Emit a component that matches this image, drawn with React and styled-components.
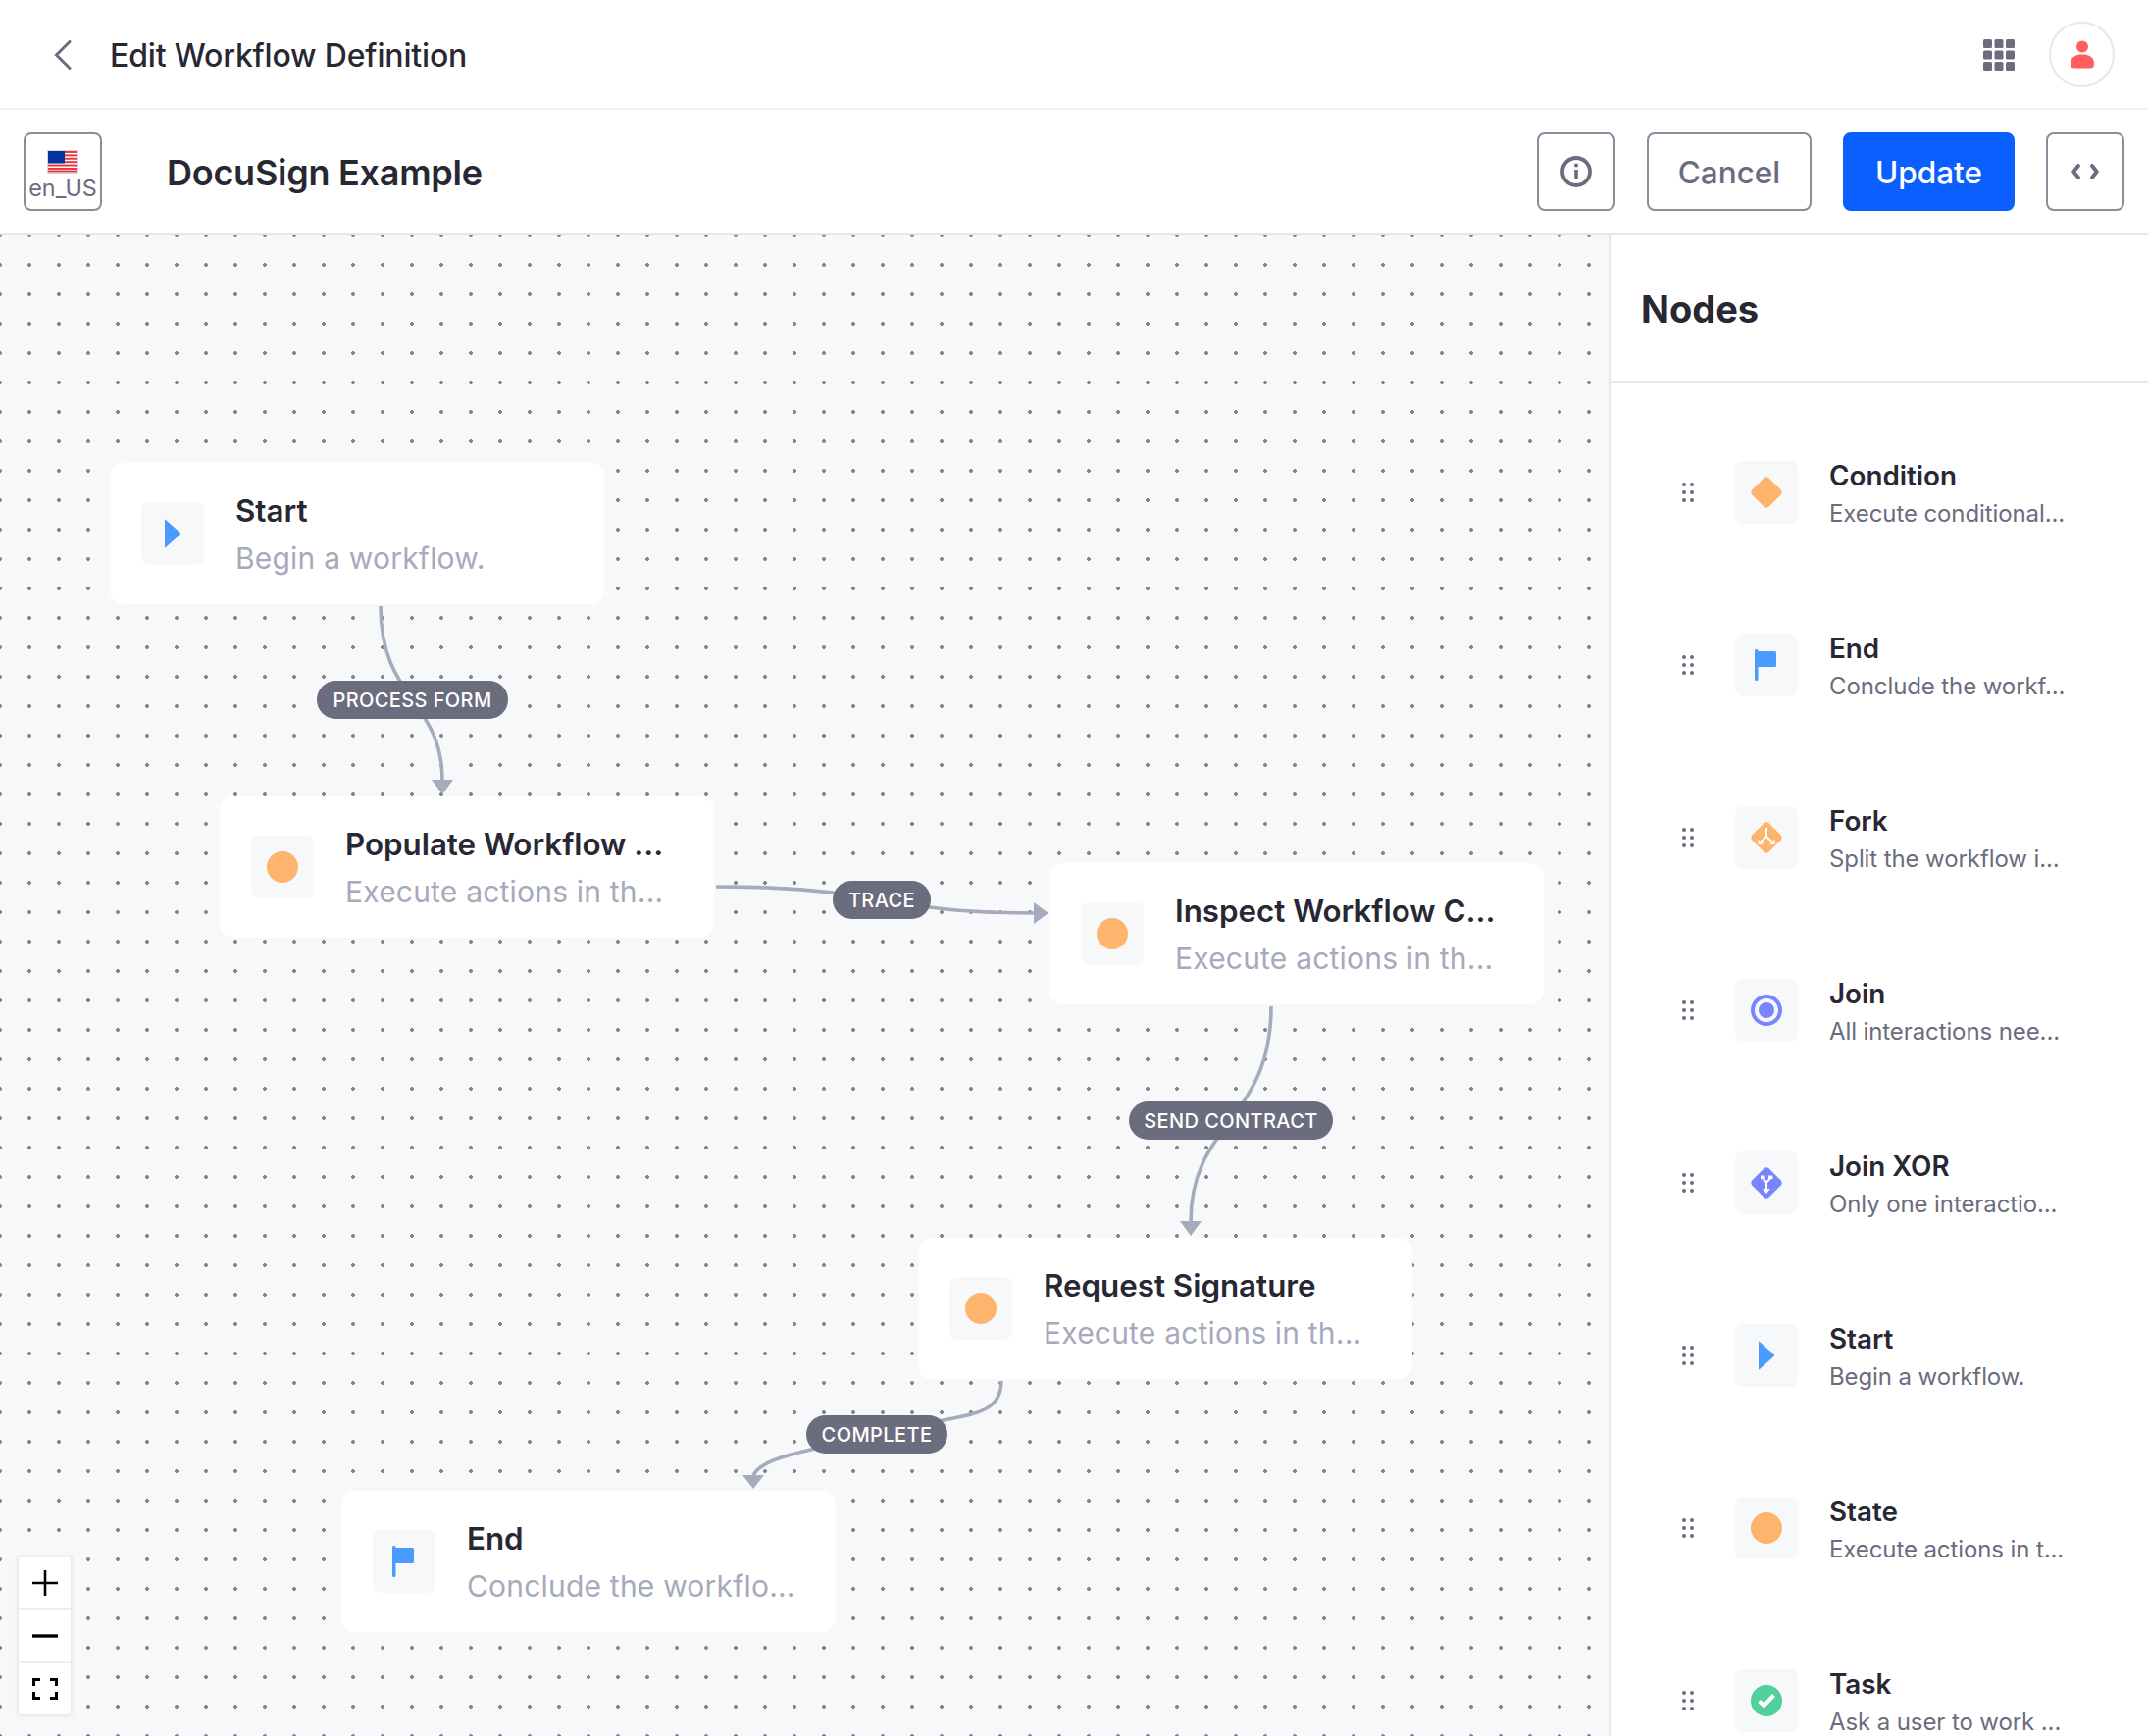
import styled, { createGlobalStyle } from 'styled-components';

const GlobalStyle = createGlobalStyle`
  html, body {
    margin: 0;
    padding: 0;
    height: 100%;
    overflow: hidden;
    background: #fff;
    font-family: Inter, "Noto Sans", sans-serif;
    color: #272833;
  }
  * {
    box-sizing: border-box;
  }
`;

const Page = styled.div`
  display: flex;
  flex-direction: column;
  width: 2190px;
  height: 1770px;
  overflow: hidden;
`;

const TopBar = styled.header`
  display: flex;
  align-items: center;
  flex: 0 0 112px;
  padding: 1px 34px 0 55px;
  border-bottom: 2px solid #f1f2f5;
`;

const BackLink = styled.a`
  display: flex;
  width: 57px;
`;

const PageTitle = styled.h1`
  flex: 1;
  margin: 0;
  padding-top: 2px;
  font-size: 32px;
  font-weight: 500;
  letter-spacing: -0.17px;
  line-height: 40px;
`;

const Avatar = styled.div`
  display: flex;
  align-items: center;
  justify-content: center;
  width: 67px;
  height: 67px;
  margin-left: 35px;
  border: 2px solid #e7e7ed;
  border-radius: 50%;
`;

const ToolBar = styled.div`
  display: flex;
  align-items: center;
  flex: 0 0 128px;
  padding: 0 24px 0 24px;
  border-bottom: 2px solid #e7e7ed;
`;

const Button = styled.button`
  display: flex;
  align-items: center;
  justify-content: center;
  height: 80px;
  padding: 0;
  border: 2px solid ${(p) => (p.$primary ? '#0b5fff' : '#8b8b9c')};
  border-radius: 8px;
  background: ${(p) => (p.$primary ? '#0b5fff' : '#fff')};
  color: ${(p) => (p.$primary ? '#fff' : '#6b6c7e')};
  font-family: inherit;
  font-size: 31.5px;
  font-weight: 500;
  width: ${(p) => p.$width || 80}px;
`;

const LocaleButton = styled(Button)`
  flex-direction: column;
  font-size: 23.4px;
  font-weight: 400;
  line-height: 26px;
  padding-top: 8px;
  gap: 2px;
`;

const FormTitle = styled.h2`
  flex: 1;
  margin: 0 0 0 66px;
  padding-top: 2px;
  font-size: 36px;
  font-weight: 600;
  letter-spacing: -0.26px;
  line-height: 44px;
`;

const ButtonRow = styled.div`
  display: flex;
  gap: 32px;
`;

const Main = styled.div`
  display: flex;
  flex: 1;
  min-height: 0;
`;

const Canvas = styled.div`
  position: relative;
  flex: 0 0 1640px;
  background-color: #f7f8f9;
  background-image: radial-gradient(circle at 15px 15px, #85858f 1.7px, transparent 2.2px);
  background-size: 30px 30px;
  background-position: -15px -15px;
  overflow: hidden;
`;

const EdgeLayer = styled.svg`
  position: absolute;
  left: 0;
  top: 0;
`;

const NodeCard = styled.div`
  position: absolute;
  left: ${(p) => p.$x}px;
  top: ${(p) => p.$y}px;
  display: flex;
  align-items: center;
  gap: 32px;
  width: 504px;
  height: 144px;
  padding: 0 32px;
  border-radius: 14px;
  background: #fff;
`;

const IconBox = styled.div`
  display: flex;
  align-items: center;
  justify-content: center;
  flex: 0 0 64px;
  height: 64px;
  border-radius: 8px;
  background: #f7f8f9;
`;

const NodeText = styled.div`
  padding-top: 2px;
`;

const NodeTitle = styled.div`
  font-size: 31.3px;
  font-weight: 600;
  line-height: 48px;
  white-space: nowrap;
`;

const NodeDesc = styled.div`
  font-size: 30px;
  letter-spacing: 0.2px;
  line-height: 48px;
  color: #a7a9bc;
  white-space: nowrap;
`;

const EdgeLabel = styled.div`
  position: absolute;
  left: ${(p) => p.$x}px;
  top: ${(p) => p.$y}px;
  display: flex;
  align-items: center;
  justify-content: center;
  width: ${(p) => p.$w}px;
  height: 39px;
  border-radius: 20px;
  background: #6b6c7e;
  color: #fff;
  font-size: 20px;
  font-weight: 500;
  letter-spacing: 0.4px;
  white-space: nowrap;
`;

const ZoomControls = styled.div`
  position: absolute;
  left: 19px;
  bottom: 22px;
  width: 53px;
  box-shadow: 0 0 4px 1px rgba(0, 0, 0, 0.1);
`;

const ZoomButton = styled.div`
  display: flex;
  align-items: center;
  justify-content: center;
  height: 54px;
  background: #fff;
  border-bottom: 2px solid #eee;
  &:last-child {
    height: 52px;
    border-bottom: none;
  }
`;

const Panel = styled.aside`
  flex: 1;
  display: flex;
  flex-direction: column;
  min-width: 0;
  border-left: 2px solid #e7e7ed;
  overflow: hidden;
`;

const PanelHeader = styled.div`
  display: flex;
  align-items: center;
  flex: 0 0 150px;
  padding: 1px 0 0 31px;
  border-bottom: 2px solid #e7e7ed;
`;

const PanelTitle = styled.h3`
  margin: 0;
  font-size: 38px;
  font-weight: 700;
`;

const NodeList = styled.div`
  padding-top: 24px;
`;

const NodeItem = styled.div`
  display: flex;
  align-items: center;
  height: 176px;
  padding-left: 73px;
`;

const DragHandle = styled.svg`
  flex: 0 0 12px;
  margin-right: 42px;
`;

const ItemText = styled.div`
  margin-left: 32px;
  padding-top: 4px;
`;

const ItemTitle = styled.div`
  font-size: 27.8px;
  font-weight: 600;
  line-height: 40px;
  white-space: nowrap;
`;

const ItemDesc = styled.div`
  font-size: 24px;
  letter-spacing: -0.1px;
  line-height: 38px;
  color: #6b6c7e;
  white-space: nowrap;
`;

const ORANGE = '#ffb46e';
const BLUE = '#4b9bff';
const PURPLE = '#7785ff';
const GREEN = '#50d09a';

const DIAMOND = 'M13.6 1.2 Q16 -0.6 18.4 1.2 L30.8 13.6 Q32.6 16 30.8 18.4 L18.4 30.8 Q16 32.6 13.6 30.8 L1.2 18.4 Q-0.6 16 1.2 13.6 Z';

const Icon = ({ children }) => (
  <svg width="32" height="32" viewBox="0 0 32 32">{children}</svg>
);

const StartIcon = () => (
  <Icon>
    <path d="M8 2.5 Q8 1 9 2 L23.6 15 Q24.4 16 23.6 17 L9 30 Q8 31 8 29.5 Z" fill={BLUE} />
  </Icon>
);

const EndIcon = () => (
  <Icon>
    <path d="M4 1.5 Q4 0 5.5 0 L6.5 0 Q7.5 0 7.5 2 L24.5 2 Q26 2 26 3.5 L26 16.5 Q26 18 24.5 18 L7.5 18 L7.5 30.5 Q7.5 32 5.8 32 Q4 32 4 30.5 Z" fill={BLUE} />
  </Icon>
);

const StateIcon = () => (
  <Icon>
    <circle cx="16" cy="16" r="16" fill={ORANGE} />
  </Icon>
);

const ConditionIcon = () => (
  <Icon>
    <path d={DIAMOND} fill={ORANGE} />
  </Icon>
);

const ForkIcon = () => (
  <Icon>
    <path d={DIAMOND} fill={ORANGE} />
    <path d="M16 6 L16 15 L9.5 21 M16 15 L22.5 21" fill="none" stroke="#fff" strokeWidth="2" />
    <path d="M7.5 17.5 L7.5 23 L13 23 Z M24.5 17.5 L24.5 23 L19 23 Z" fill="#fff" />
  </Icon>
);

const JoinIcon = () => (
  <Icon>
    <circle cx="16" cy="16" r="14" fill="none" stroke={PURPLE} strokeWidth="4" />
    <circle cx="16" cy="16" r="8" fill={PURPLE} />
  </Icon>
);

const JoinXorIcon = () => (
  <Icon>
    <path d={DIAMOND} fill={PURPLE} />
    <path d="M12 11 L16 15.5 L20.5 11 M16 15.5 L16 23" fill="none" stroke="#fff" strokeWidth="2" />
    <path d="M12 22 L20 22 L16 27 Z" fill="#fff" />
    <rect x="10" y="8.5" width="4.5" height="3.5" fill="#fff" />
    <rect x="18" y="8.5" width="4.5" height="3.5" fill="#fff" />
  </Icon>
);

const TaskIcon = () => (
  <Icon>
    <circle cx="16" cy="16" r="16" fill={GREEN} />
    <path d="M8.5 16.5 L13.5 21 L23.5 10.5" fill="none" stroke="#fff" strokeWidth="4" />
  </Icon>
);

const FlagIcon = () => (
  <svg width="32" height="24" viewBox="0 0 32 24">
    <rect x="0.5" y="0.5" width="31" height="23" fill="#fff" stroke="#d5d6de" />
    {[1, 4.4, 7.8, 11.2, 14.6, 18, 20.6].map((y) => (
      <rect key={y} x="1" y={y} width="30" height="1.9" fill="#e8343a" />
    ))}
    <rect x="1" y="1" width="17" height="12.5" fill="#03339c" />
  </svg>
);

const nodes = [
  { x: 112, y: 232, icon: <StartIcon />, title: 'Start', desc: 'Begin a workflow.' },
  { x: 224, y: 572, icon: <StateIcon />, title: 'Populate Workflow ...', desc: 'Execute actions in th...' },
  { x: 1070, y: 640, icon: <StateIcon />, title: 'Inspect Workflow C...', desc: 'Execute actions in th...' },
  { x: 936, y: 1022, icon: <StateIcon />, title: 'Request Signature', desc: 'Execute actions in th...' },
  { x: 348, y: 1280, icon: <EndIcon />, title: 'End', desc: 'Conclude the workflo...' },
];

const edges = [
  { d: 'M388 378 C388 474 451 474 451 556', arrow: '440,555 462,555 451,570' },
  { d: 'M730 664 C900 664 900 691 1056 691', arrow: '1054,680 1054,702 1069,691' },
  { d: 'M1296 786 C1296 903 1214 903 1214 1006', arrow: '1203,1005 1225,1005 1214,1020' },
  { d: 'M1021 1168 C1021 1210 975 1200 894 1223 C830 1238 775 1245 768 1265', arrow: '757,1264 779,1264 768,1278' },
];

const labels = [
  { x: 323, y: 454, w: 195, text: 'PROCESS FORM' },
  { x: 849, y: 658, w: 100, text: 'TRACE' },
  { x: 1151, y: 883, w: 208, text: 'SEND CONTRACT' },
  { x: 822, y: 1203, w: 144, text: 'COMPLETE' },
];

const items = [
  { icon: <ConditionIcon />, title: 'Condition', desc: 'Execute conditional...' },
  { icon: <EndIcon />, title: 'End', desc: 'Conclude the workf...' },
  { icon: <ForkIcon />, title: 'Fork', desc: 'Split the workflow i...' },
  { icon: <JoinIcon />, title: 'Join', desc: 'All interactions nee...' },
  { icon: <JoinXorIcon />, title: 'Join XOR', desc: 'Only one interactio...' },
  { icon: <StartIcon />, title: 'Start', desc: 'Begin a workflow.' },
  { icon: <StateIcon />, title: 'State', desc: 'Execute actions in t...' },
  { icon: <TaskIcon />, title: 'Task', desc: 'Ask a user to work ...' },
];

const App = () => (
  <Page>
    <GlobalStyle />
    <TopBar>
      <BackLink>
        <svg width="18" height="30" viewBox="0 0 18 30">
          <path d="M16 1.5 L2.5 15 L16 28.5" fill="none" stroke="#6b6c7e" strokeWidth="3" strokeLinecap="round" />
        </svg>
      </BackLink>
      <PageTitle>Edit Workflow Definition</PageTitle>
      <svg width="32" height="32" viewBox="0 0 32 32" fill="#6b6c7e">
        {[0, 11.5, 23].map((y) =>
          [0, 11.5, 23].map((x) => <rect key={`${x}-${y}`} x={x} y={y} width="9" height="9" rx="1.5" />)
        )}
      </svg>
      <Avatar>
        <svg width="24" height="30" viewBox="0 0 24 30" fill="#ff5f5f">
          <circle cx="12" cy="6.5" r="6" />
          <path d="M0 24 C0 17 5 14.5 12 14.5 C19 14.5 24 17 24 24 C24 28 22 28.5 19 28.5 L5 28.5 C2 28.5 0 28 0 24 Z" />
        </svg>
      </Avatar>
    </TopBar>

    <ToolBar>
      <LocaleButton>
        <FlagIcon />
        <span>en_US</span>
      </LocaleButton>
      <FormTitle>DocuSign Example</FormTitle>
      <ButtonRow>
        <Button>
          <svg width="32" height="32" viewBox="0 0 32 32" fill="none" stroke="#6b6c7e">
            <circle cx="16" cy="16" r="14" strokeWidth="3.8" />
            <path d="M16 14 L16 24" strokeWidth="3.6" />
            <circle cx="16" cy="9.5" r="2" fill="#6b6c7e" stroke="none" />
          </svg>
        </Button>
        <Button $width={168}>Cancel</Button>
        <Button $primary $width={175}>Update</Button>
        <Button>
          <svg width="28" height="16" viewBox="0 0 28 16" fill="none" stroke="#6b6c7e" strokeWidth="3.8" strokeLinecap="round" strokeLinejoin="round">
            <path d="M7 2 L2.2 8 L7 14" />
            <path d="M21 2 L25.8 8 L21 14" />
          </svg>
        </Button>
      </ButtonRow>
    </ToolBar>

    <Main>
      <Canvas>
        <EdgeLayer width="1640" height="1530">
          {edges.map((e) => (
            <g key={e.d}>
              <path d={e.d} fill="none" stroke="#a7a9bc" strokeWidth="3.6" />
              <polygon points={e.arrow} fill="#a7a9bc" />
            </g>
          ))}
        </EdgeLayer>
        {nodes.map((n) => (
          <NodeCard key={n.title} $x={n.x} $y={n.y}>
            <IconBox>{n.icon}</IconBox>
            <NodeText>
              <NodeTitle>{n.title}</NodeTitle>
              <NodeDesc>{n.desc}</NodeDesc>
            </NodeText>
          </NodeCard>
        ))}
        {labels.map((l) => (
          <EdgeLabel key={l.text} $x={l.x} $y={l.y} $w={l.w}>{l.text}</EdgeLabel>
        ))}
        <ZoomControls>
          <ZoomButton>
            <svg width="26" height="26" viewBox="0 0 26 26" stroke="#000" strokeWidth="2.6">
              <path d="M13 0 L13 26 M0 13 L26 13" />
            </svg>
          </ZoomButton>
          <ZoomButton>
            <svg width="26" height="4" viewBox="0 0 26 4" stroke="#000" strokeWidth="3.4">
              <path d="M0 2 L26 2" />
            </svg>
          </ZoomButton>
          <ZoomButton>
            <svg width="26" height="22" viewBox="0 0 26 22" fill="none" stroke="#000" strokeWidth="3">
              <path d="M1.5 8 L1.5 1.5 L8 1.5 M18 1.5 L24.5 1.5 L24.5 8 M24.5 14 L24.5 20.5 L18 20.5 M8 20.5 L1.5 20.5 L1.5 14" />
            </svg>
          </ZoomButton>
        </ZoomControls>
      </Canvas>

      <Panel>
        <PanelHeader>
          <PanelTitle>Nodes</PanelTitle>
        </PanelHeader>
        <NodeList>
          {items.map((item) => (
            <NodeItem key={item.title}>
              <DragHandle width="12" height="20" viewBox="0 0 12 20" fill="#6b6c7e">
                {[2, 10, 18].map((y) =>
                  [2, 10].map((x) => <circle key={`${x}-${y}`} cx={x} cy={y} r="2" />)
                )}
              </DragHandle>
              <IconBox>{item.icon}</IconBox>
              <ItemText>
                <ItemTitle>{item.title}</ItemTitle>
                <ItemDesc>{item.desc}</ItemDesc>
              </ItemText>
            </NodeItem>
          ))}
        </NodeList>
      </Panel>
    </Main>
  </Page>
);

export default App;
